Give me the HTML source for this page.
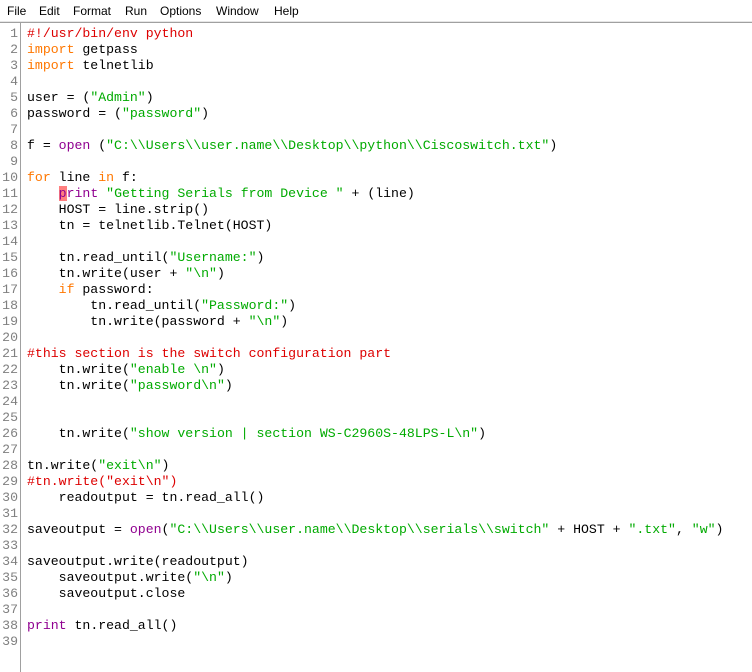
<!DOCTYPE html>
<html><head><meta charset="utf-8"><style>
html,body{margin:0;padding:0;background:#fff;width:752px;height:672px;overflow:hidden;}
#menu{position:absolute;top:0;left:0;width:752px;height:21px;background:#fff;font-family:"Liberation Sans",sans-serif;font-size:12px;color:#000;}
#menu span{position:absolute;top:4px;}
#sep1{position:absolute;top:21px;left:0;width:752px;height:1px;background:#e6e6e6;}
#sep2{position:absolute;top:22px;left:0;width:752px;height:1px;background:#a0a0a0;}
#gut{position:absolute;top:23px;left:20px;width:1px;height:649px;background:#a0a0a0;}
pre{margin:0;position:absolute;top:26px;font-family:"Liberation Mono",monospace;font-size:13.2px;line-height:16px;}
#nums{left:0;width:18px;text-align:right;color:#808080;}
#code{left:27px;color:#000;}
.k{color:#ff7700}.s{color:#00aa00}.c{color:#dd0000}.b{color:#900090}
.cur{background:#ff7f7f}
</style></head><body>
<div id="menu"><span style="left:7px">File</span><span style="left:39px">Edit</span><span style="left:73px">Format</span><span style="left:125px">Run</span><span style="left:160px">Options</span><span style="left:216px">Window</span><span style="left:274px">Help</span></div>
<div id="sep1"></div><div id="sep2"></div><div id="gut"></div>
<pre id="nums">1
2
3
4
5
6
7
8
9
10
11
12
13
14
15
16
17
18
19
20
21
22
23
24
25
26
27
28
29
30
31
32
33
34
35
36
37
38
39</pre>
<pre id="code"><span class="c">#!/usr/bin/env python</span>
<span class="k">import</span> getpass
<span class="k">import</span> telnetlib

user = (<span class="s">"Admin"</span>)
password = (<span class="s">"password"</span>)

f = <span class="b">open</span> (<span class="s">"C:\\Users\\user.name\\Desktop\\python\\Ciscoswitch.txt"</span>)

<span class="k">for</span> line <span class="k">in</span> f:
    <span class="b"><span class="cur">p</span>rint</span> <span class="s">"Getting Serials from Device "</span> + (line)
    HOST = line.strip()
    tn = telnetlib.Telnet(HOST)

    tn.read_until(<span class="s">"Username:"</span>)
    tn.write(user + <span class="s">"\n"</span>)
    <span class="k">if</span> password:
        tn.read_until(<span class="s">"Password:"</span>)
        tn.write(password + <span class="s">"\n"</span>)

<span class="c">#this section is the switch configuration part</span>
    tn.write(<span class="s">"enable \n"</span>)
    tn.write(<span class="s">"password\n"</span>)


    tn.write(<span class="s">"show version | section WS-C2960S-48LPS-L\n"</span>)

tn.write(<span class="s">"exit\n"</span>)
<span class="c">#tn.write("exit\n")</span>
    readoutput = tn.read_all()

saveoutput = <span class="b">open</span>(<span class="s">"C:\\Users\\user.name\\Desktop\\serials\\switch"</span> + HOST + <span class="s">".txt"</span>, <span class="s">"w"</span>)

saveoutput.write(readoutput)
    saveoutput.write(<span class="s">"\n"</span>)
    saveoutput.close

<span class="b">print</span> tn.read_all()
</pre>
</body></html>
